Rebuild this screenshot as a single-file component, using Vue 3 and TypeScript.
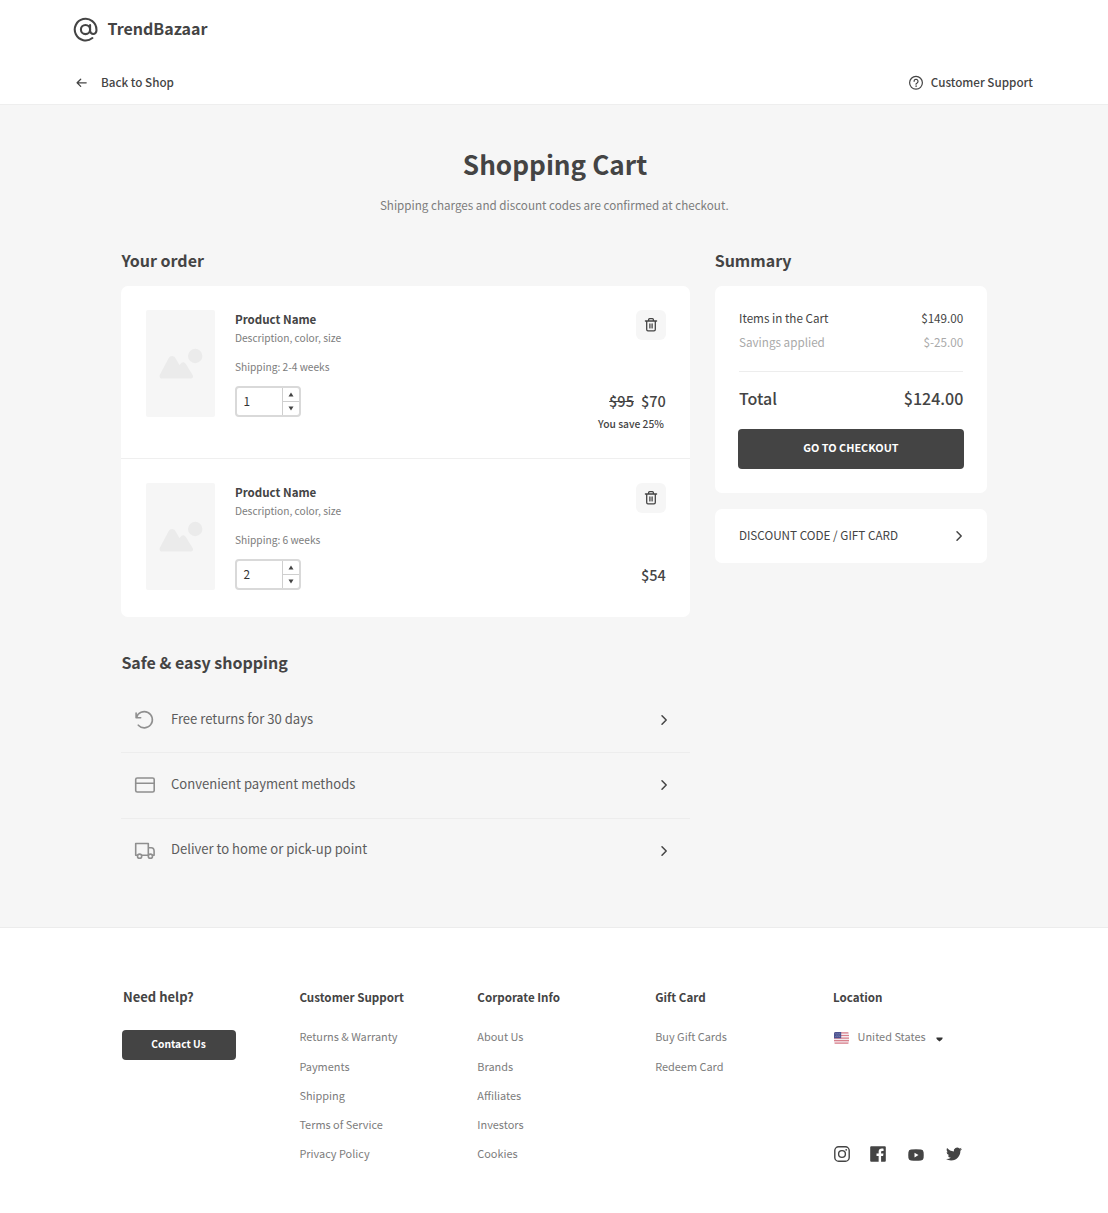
<script setup lang="ts">
interface CartItem {
  name: string
  details: string
  shipping: string
  quantity: number
  oldPrice?: string
  price: string
  note?: string
}

const items: CartItem[] = [
  { name: 'Product Name', details: 'Description, color, size', shipping: 'Shipping: 2-4 weeks', quantity: 1, oldPrice: '$95', price: '$70', note: 'You save 25%' },
  { name: 'Product Name', details: 'Description, color, size', shipping: 'Shipping: 6 weeks', quantity: 2, price: '$54' },
]

const perks: { icon: string; label: string }[] = [
  { icon: 'return', label: 'Free returns for 30 days' },
  { icon: 'payment', label: 'Convenient payment methods' },
  { icon: 'truck', label: 'Deliver to home or pick-up point' },
]

const columns: { title: string; links: string[] }[] = [
  { title: 'Customer Support', links: ['Returns & Warranty', 'Payments', 'Shipping', 'Terms of Service', 'Privacy Policy'] },
  { title: 'Corporate Info', links: ['About Us', 'Brands', 'Affiliates', 'Investors', 'Cookies'] },
  { title: 'Gift Card', links: ['Buy Gift Cards', 'Redeem Card'] },
]
</script>

<template>
  <div class="page">
    <header class="header">
      <div class="brand">
        <svg width="25" height="25" viewBox="0 0 24 24" fill="none" stroke="#444" stroke-width="2" stroke-linecap="round">
          <circle cx="12" cy="12" r="4.400" />
          <path d="M16.400 7.800v5.400a3.050 3.050 0 0 0 6.100 0V12A10.400 10.400 0 1 0 18.600 20.200" />
        </svg>
        <span class="brand-name">TrendBazaar</span>
      </div>
      <nav class="nav">
        <a class="nav-link">
          <svg class="back-icon" width="16" height="16" viewBox="0 0 16 16" fill="none" stroke="#444" stroke-width="1.25" stroke-linecap="round" stroke-linejoin="round">
            <path d="M12.200 7.800H3.200M6.700 4.200L3.100 7.800L6.700 11.400" />
          </svg>
          <span class="back-label">Back to Shop</span>
        </a>
        <a class="nav-link">
          <svg class="help-icon" width="16" height="16" viewBox="0 0 16 16" fill="none" stroke="#444" stroke-width="1.2" stroke-linecap="round">
            <circle cx="8" cy="7.800" r="6.400" />
            <path d="M6.100 6.300a1.950 1.950 0 1 1 3 1.600C8.400 8.300 8 8.600 8 9.200" />
            <circle cx="8" cy="11.100" r=".4" fill="#444" stroke-width=".6" />
          </svg>
          <span class="support-label">Customer Support</span>
        </a>
      </nav>
    </header>

    <main class="main">
      <h1>Shopping Cart</h1>
      <p class="subtitle">Shipping charges and discount codes are confirmed at checkout.</p>

      <div class="content">
        <div class="left">
          <h2>Your order</h2>
          <section class="card order">
            <article v-for="(item, i) in items" :key="i" class="item">
              <div class="thumb">
                <svg width="44" height="32" viewBox="0 0 44 32" fill="#ebebeb">
                  <circle cx="36.200" cy="8" r="7.200" />
                  <path d="M3.400 30.500C.6 30.500-.1 28.400 1.100 26.200L9.600 10.300c1.700-3.200 5.200-3.200 6.900 0l4 6.600 1.300-1.500c1.600-1.700 3.700-1.500 4.900.4l6.900 11.200c1.100 1.900.2 3.500-1.900 3.500z" />
                </svg>
              </div>
              <div class="info">
                <div class="name">{{ item.name }}</div>
                <div class="meta">{{ item.details }}</div>
                <div class="meta ship">{{ item.shipping }}</div>
                <div class="qty">
                  <span class="qty-value">{{ item.quantity }}</span>
                  <span class="steps">
                    <span class="step"><svg width="6" height="5" viewBox="0 0 6 5"><path d="M3 .5L5.500 4.500H.5z" fill="#444" /></svg></span>
                    <span class="step"><svg width="6" height="5" viewBox="0 0 6 5"><path d="M3 4.500L5.500.5H.5z" fill="#444" /></svg></span>
                  </span>
                </div>
              </div>
              <div class="side">
                <button class="trash" aria-label="Remove">
                  <svg width="14" height="16" viewBox="0 0 14 16" fill="none" stroke="#444" stroke-width="1.300" stroke-linecap="round" stroke-linejoin="round">
                    <path d="M1.400 4h11.200M2.700 4v8.600a1.300 1.300 0 0 0 1.300 1.300h6a1.300 1.300 0 0 0 1.300-1.300V4M4.600 3.800V2.700A1 1 0 0 1 5.600 1.700h2.800a1 1 0 0 1 1 1v1.100M5.900 6.900v4M8.100 6.900v4" />
                  </svg>
                </button>
                <div class="prices">
                  <s v-if="item.oldPrice">{{ item.oldPrice }}</s>
                  <span>{{ item.price }}</span>
                </div>
                <div v-if="item.note" class="note">{{ item.note }}</div>
              </div>
            </article>
          </section>

          <h2 class="safe">Safe &amp; easy shopping</h2>
          <ul class="perks">
            <li v-for="perk in perks" :key="perk.icon" class="perk">
              <svg class="perk-icon" width="22" height="22" viewBox="0 0 22 22" fill="none" stroke="#8f8f8f" stroke-width="1.600" stroke-linecap="round" stroke-linejoin="round">
                <path v-if="perk.icon === 'return'" d="M2.100 4.100v4.600h4.600M2.500 8.500A8.100 8.100 0 1 1 4.300 16.200" />
                <template v-else-if="perk.icon === 'payment'">
                  <rect x="1.700" y="4" width="18.500" height="14" rx="1.600" />
                  <path d="M1.700 9.200H20.200" />
                </template>
                <template v-else>
                  <path d="M3.500 15.200H1.700V3.500h12.600v11.700H7.700M14.300 7.700h2.900c1.700 0 2.900 1.500 2.900 3.600v3.900h-1.600M14.300 15.200h.1" />
                  <circle cx="5.600" cy="16.200" r="2.100" />
                  <circle cx="16.400" cy="16.200" r="2.100" />
                </template>
              </svg>
              <span class="perk-label">{{ perk.label }}</span>
              <svg class="chevron" width="8" height="12" viewBox="0 0 8 12" fill="none" stroke="#444" stroke-width="1.500" stroke-linecap="round" stroke-linejoin="round"><path d="M2 1.800L6.200 6L2 10.200" /></svg>
            </li>
          </ul>
        </div>

        <aside class="right">
          <h2>Summary</h2>
          <section class="card summary">
            <div class="line"><span>Items in the Cart</span><span>$149.00</span></div>
            <div class="line muted"><span>Savings applied</span><span>$-25.00</span></div>
            <div class="rule"></div>
            <div class="total"><span>Total</span><span>$124.00</span></div>
            <button class="checkout"><span>GO TO CHECKOUT</span></button>
          </section>
          <section class="card discount">
            <span class="discount-label">DISCOUNT CODE / GIFT CARD</span>
            <svg width="8" height="12" viewBox="0 0 8 12" fill="none" stroke="#444" stroke-width="1.500" stroke-linecap="round" stroke-linejoin="round"><path d="M2 1.800L6.200 6L2 10.200" /></svg>
          </section>
        </aside>
      </div>
    </main>

    <footer class="footer">
      <div class="col">
        <h3 class="need">Need help?</h3>
        <button class="contact"><span>Contact Us</span></button>
      </div>
      <div v-for="col in columns" :key="col.title" class="col">
        <h3>{{ col.title }}</h3>
        <ul class="links">
          <li v-for="link in col.links" :key="link">{{ link }}</li>
        </ul>
      </div>
      <div class="col">
        <h3>Location</h3>
        <div class="country">
          <svg class="flag" width="15" height="12" viewBox="0 0 15 12">
            <rect width="15" height="12" rx="2" fill="#f3e9ec" />
            <path d="M.6 .9H14.400M0 3.500H15M0 6.100H15M0 8.700H15M.6 11.200H14.400" stroke="#d9808c" stroke-width="1.200" />
            <path d="M1.500 0H7.200V6.200H0V1.500A1.500 1.500 0 0 1 1.500 0z" fill="#4c5290" />
            <path d="M1.500 1.700h.8M3.500 1.700h.8M5.400 1.700h.8M2.500 3.100h.8M4.500 3.100h.8M1.500 4.500h.8M3.500 4.500h.8M5.400 4.500h.8" stroke="#a9acd0" stroke-width=".7" />
          </svg>
          <span class="country-name">United States</span>
          <svg class="caret" width="7" height="5" viewBox="0 0 7 5"><path d="M.5 .6h6c.3.900-.1 1.300-.6 1.800L3.500 4.600L1.100 2.400C.6 1.900.2 1.500.5.600z" fill="#333" /></svg>
        </div>
        <div class="social">
          <svg class="instagram" width="16" height="16" viewBox="0 0 16 16" fill="none" stroke="#444" stroke-width="1.400">
            <rect x=".8" y=".8" width="14.400" height="14.400" rx="3.800" />
            <circle cx="8" cy="8" r="3.400" />
            <circle cx="12.200" cy="3.800" r=".9" fill="#444" stroke="none" />
          </svg>
          <svg class="facebook" width="16" height="16" viewBox="0 0 16 16">
            <path fill="#444" d="M1.200.2h13.600a1 1 0 0 1 1 1v13.600a1 1 0 0 1-1 1h-3.700V9.900h2l.35-2.400H11.100V6.100c0-.8.3-1.200 1.200-1.200h1.250V2.700c-.4-.1-1-.1-1.700-.1-2 0-3.200 1.200-3.200 3.200v1.700H6.500v2.400h2.150v5.900H1.200a1 1 0 0 1-1-1V1.200a1 1 0 0 1 1-1z" />
          </svg>
          <svg class="youtube" width="16" height="16" viewBox="0 0 16 16">
            <path fill="#444" fill-rule="evenodd" d="M3 3.500Q8 2.900 13 3.500Q15.400 3.700 15.600 6.300Q15.900 9.100 15.600 11.900Q15.300 14.300 13 14.500Q8 14.900 3 14.500Q.7 14.300.4 11.900Q.1 9.100.4 6.300Q.6 3.700 3 3.500zM6.500 6.700v4.700L10.500 9.050z" />
          </svg>
          <svg class="twitter" width="16" height="16" viewBox="0 0 24 24">
            <path fill="#444" d="M23.950 4.570a10 10 0 0 1-2.820.77 4.960 4.960 0 0 0 2.160-2.720c-.95.550-2 .95-3.130 1.180a4.920 4.920 0 0 0-8.380 4.480C7.690 8.090 4.070 6.130 1.640 3.160a4.820 4.820 0 0 0-.67 2.480c0 1.710.87 3.210 2.190 4.100a4.900 4.900 0 0 1-2.230-.62v.06a4.920 4.920 0 0 0 3.950 4.830 5 5 0 0 1-2.210.08 4.940 4.940 0 0 0 4.600 3.420A9.870 9.870 0 0 1 0 19.540a13.990 13.990 0 0 0 7.550 2.210c9.050 0 14-7.500 14-13.980 0-.21 0-.42-.02-.63a9.940 9.940 0 0 0 2.460-2.550z" />
          </svg>
        </div>
      </div>
    </footer>
  </div>
</template>

<style>
body {
  background: #fff;
}
</style>

<style scoped>
.page {
  width: 1108px;
  height: 1213px;
  overflow: hidden;
  background: #fff;
  color: #444;
  font-family: "Noto Sans CJK SC", "Noto Sans", sans-serif;
  white-space: nowrap;
}
.page * { box-sizing: border-box; }
h1, h2, h3, p, ul { margin: 0; padding: 0; }
ul { list-style: none; }
svg { display: block; flex: none; }
button { border: 0; padding: 0; font-family: inherit; display: flex; align-items: center; justify-content: center; }

.header { height: 105px; border-bottom: 1px solid #eee; padding: 0 75px 0 72.500px; }
.brand { height: 58px; display: flex; align-items: center; }
.brand svg { margin-left: .5px; }
.brand-name { margin-left: 9.500px; padding-bottom: 2px; font-size: 16px; font-weight: 700; line-height: 24px; }
.nav { height: 46px; padding-top: 2px; display: flex; justify-content: space-between; align-items: center; }
.nav-link { display: flex; align-items: center; font-size: 11.680px; font-weight: 500; line-height: 20px; }
.back-icon { margin-left: 1px; margin-top: 1px; }
.back-label { margin-left: 11.500px; }
.help-icon { margin-top: 1px; }
.support-label { margin-left: 7px; }

.main { height: 823px; background: #f6f6f6; border-bottom: 1px solid #ececec; padding-top: 41px; }
h1 { font-size: 26.150px; line-height: 36px; font-weight: 700; text-align: center; padding-left: 2px; }
.subtitle { margin-top: 13px; font-size: 11.650px; line-height: 20px; color: #7c7c7c; text-align: center; padding-left: .5px; }
.content { margin-top: 33px; padding-left: 121.400px; display: flex; gap: 24.800px; }
.left { width: 568.500px; }
.right { width: 272.600px; }
h2 { font-size: 16px; line-height: 24px; font-weight: 700; }
.card { background: #fff; border-radius: 7px; }

.order { margin-top: 14px; }
.item { height: 157.500px; padding: 24px 24px 0 24.200px; display: flex; }
.item:first-child { height: 173px; border-bottom: 1px solid #efefef; }
.thumb { width: 69.500px; height: 106.500px; background: #f6f6f6; border-radius: 2px; padding: 37.500px 0 0 13px; }
.info { margin-left: 19.900px; width: 200px; }
.name { font-size: 11.550px; font-weight: 700; line-height: 18px; }
.meta { margin-top: 1.500px; font-size: 10.200px; line-height: 16px; color: #7c7c7c; }
.meta:not(.ship) { margin-top: 2px; }
.ship { margin-top: 13px; }
.qty { margin-top: 11px; width: 66.500px; height: 31px; border: 2px solid #d9d9d9; border-radius: 4px; display: flex; }
.qty-value { flex: 1; padding-left: 6.500px; font-size: 11.800px; line-height: 26px; color: #333; }
.steps { width: 17px; border-left: 1px solid #cfcfcf; display: flex; flex-direction: column; }
.step { flex: 1; display: flex; align-items: center; justify-content: center; }
.step + .step { border-top: 1px solid #cfcfcf; }
.side { margin-left: auto; display: flex; flex-direction: column; align-items: flex-end; }
.trash { width: 29.500px; height: 29.500px; border-radius: 6px; background: #f6f6f6; }
.prices { margin-top: 51.500px; margin-right: .2px; font-size: 14.500px; line-height: 20px; font-weight: 500; display: flex; gap: 7px; }
.item:last-child .prices { margin-top: 52px; }
.note { margin-top: 4.500px; margin-right: 2px; font-size: 10.250px; font-weight: 500; line-height: 16px; }

.safe { margin-top: 33.500px; }
.perks { margin-top: 13px; }
.perk { height: 66px; border-bottom: 1px solid #ededed; padding: 0 22px 0 12.900px; display: flex; align-items: center; color: #5c5c5c; }
.perk:nth-child(2) { padding-bottom: 2px; }
.perk:last-child { border-bottom-color: transparent; padding-bottom: 2px; }
.perk-icon { margin-top: 1px; }
.perk-label { margin-left: 14.700px; padding-bottom: 2px; font-size: 13.080px; line-height: 20px; }
.perk:first-child .perk-label { padding-bottom: 1px; }
.perk:nth-child(2) .perk-label { padding-bottom: 1px; }
.perk:last-child .perk-label { padding-bottom: 3px; }
.chevron { margin-left: auto; margin-top: 1px; }

.summary { margin-top: 14px; height: 207px; padding: 22px 24px 0 24.300px; }
.line { display: flex; justify-content: space-between; font-size: 11.680px; line-height: 20px; margin-bottom: 4px; }
.muted { color: #a9a9a9; margin: 0; }
.rule { margin-top: 19px; height: 1px; background: #ededed; }
.total { margin-top: 14px; display: flex; justify-content: space-between; font-size: 16px; line-height: 24px; font-weight: 500; }
.checkout { margin: 19px 0 0 -.8px; width: 225.500px; height: 40px; border-radius: 4px; background: #444; color: #fff; font-size: 10.850px; font-weight: 700; line-height: 18px; }
.checkout span { padding-bottom: 4px; }
.contact span { padding-bottom: 2px; }
.discount { margin-top: 16px; height: 54px; padding: 0 24.200px; display: flex; align-items: center; justify-content: space-between; }
.discount-label { padding-bottom: 2px; font-size: 11.720px; line-height: 18px; }

.footer { height: 285px; background: #fff; padding: 59px 0 0 121.500px; display: flex; }
.col { width: 177.900px; }
h3 { font-size: 11.600px; line-height: 20px; font-weight: 700; }
h3.need { font-size: 13px; padding-left: 1.500px; }
.contact { margin-top: 23px; width: 114px; height: 30px; border-radius: 4px; background: #444; color: #fff; font-size: 10.250px; font-weight: 700; line-height: 18px; }
.links { margin-top: 20.400px; font-size: 10.930px; line-height: 18px; color: #7c7c7c; display: flex; flex-direction: column; gap: 11.200px; }
.country { margin-top: 20px; height: 18px; display: flex; align-items: center; font-size: 10.950px; line-height: 18px; color: #7c7c7c; }
.country-name { margin: 0 10.300px 0 8.500px; }
.flag { margin-left: 1px; margin-top: 3px; }
.caret { margin-top: 6px; }
.social { margin-top: 101px; padding-left: .7px; display: flex; }
.facebook { margin-left: 20px; }
.youtube { margin-left: 22px; }
.twitter { margin-left: 22.300px; }
</style>
